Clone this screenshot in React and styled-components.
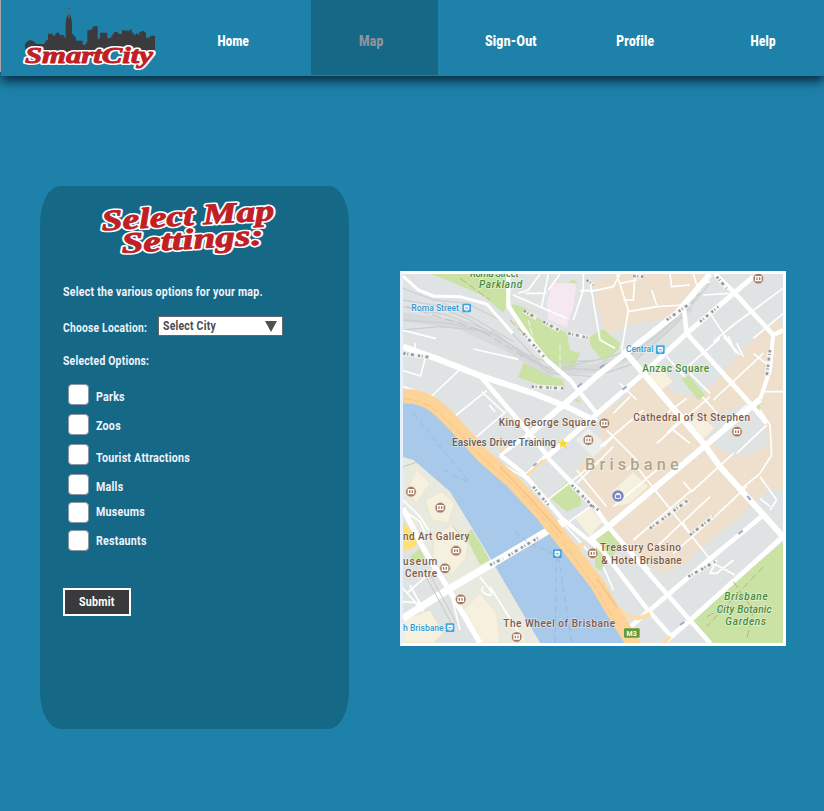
import React from "react";
import styled, { createGlobalStyle } from "styled-components";

const GlobalStyle = createGlobalStyle`
  * { box-sizing: border-box; }
  body {
    margin: 0;
    background: #1e81a9;
    font-family: Roboto, "Open Sans", sans-serif;
    overflow: hidden;
  }
`;

const Page = styled.div`
  width: 824px;
  height: 811px;
  display: flex;
  flex-direction: column;
  background: #1e81a9;
`;

const Header = styled.header`
  height: 76px;
  flex: none;
  margin-left: 1px;
  display: grid;
  grid-template-columns: 155px 155px 127px 146px 101px 139px;
  background: #1e81a9;
  box-shadow: -1px -4px 0 #a9a3a6, 0 5px 10px 0 rgba(0, 20, 32, 0.8);
`;

const Logo = styled.svg`
  width: 155px;
  height: 76px;
  display: block;
`;

const NavItem = styled.a`
  display: flex;
  align-items: center;
  justify-content: center;
  height: 75px;
  padding: 7px ${(p) => p.$right || 0}px 0 ${(p) => p.$left || 0}px;
  background: ${(p) => (p.$active ? "#156987" : "transparent")};
  color: ${(p) => (p.$active ? "#93939b" : "#fff")};
`;

const Condensed = styled.span`
  display: inline-block;
  white-space: nowrap;
  font-weight: ${(p) => p.$weight || 700};
  font-size: ${(p) => p.$size || 13}px;
  line-height: 16px;
  letter-spacing: 0.3px;
  transform: scaleX(${(p) => p.$x || 0.82});
  transform-origin: ${(p) => p.$origin || "left"} center;
`;

const Main = styled.main`
  flex: 1;
  display: flex;
  align-items: flex-start;
  padding: 110px 0 0 40px;
`;

const Panel = styled.section`
  width: 309px;
  height: 543px;
  border-radius: 20px / 38px;
  background: #156987;
  color: #f3f3fb;
  padding-left: 23px;
  display: flex;
  flex-direction: column;
  align-items: flex-start;
`;

const Title = styled.svg`
  width: 200px;
  height: 64px;
  margin: 9px 0 0 27px;
  flex: none;
`;

const Line = styled.div`
  height: 20px;
  display: flex;
  align-items: center;
  margin-top: ${(p) => p.$top}px;
`;

const LocationLabel = styled.label`
  width: 95px;
`;

const Select = styled.div`
  width: 125px;
  height: 20px;
  display: flex;
  align-items: center;
  justify-content: space-between;
  padding: 0 5px 1px 4px;
  border: 1px solid #65656c;
  background: #fff;
  color: #4b4b50;
`;

const Arrow = styled.svg`
  width: 12px;
  height: 11px;
  margin-top: 1px;
`;

const Options = styled.div`
  margin: 13px 0 0 5px;
  display: flex;
  flex-direction: column;
`;

const Option = styled.label`
  height: ${(p) => p.$h}px;
  display: flex;
  align-items: flex-start;
  gap: 7.4px;
`;

const Box = styled.span`
  width: 21px;
  height: 21px;
  border: 1px solid #8c97a5;
  border-radius: 4px;
  background: #fff;
`;

const OptionText = styled.span`
  display: flex;
  padding-top: ${(p) => p.$drop}px;
`;

const Submit = styled.button`
  width: 68px;
  height: 28px;
  margin-top: 37px;
  padding: 0;
  border: 2px solid #fff;
  background: #3a3a3c;
  color: #fff;
  font-family: inherit;
`;

const MapFrame = styled.figure`
  width: 386px;
  height: 375px;
  margin: 85px 0 0 51px;
  border: 3px solid #fff;
  border-left-color: #e8f0fc;
`;

const MapDrawing = styled.svg`
  width: 380px;
  height: 369px;
  display: block;
`;

const Lettering = styled.text`
  font-family: "Liberation Serif", serif;
  font-weight: 700;
  font-style: italic;
  fill: #c01f26;
  stroke: ${(p) => (p.$outline ? "#fff" : "#c01f26")};
  stroke-width: ${(p) => (p.$outline ? 4 : 0.9)}px;
  stroke-linejoin: round;
`;

const MapLabel = styled.text`
  font-family: Roboto, sans-serif;
  font-size: ${(p) => p.$size || 30}px;
  font-style: ${(p) => (p.$italic ? "italic" : "normal")};
  font-weight: 500;
  fill: ${(p) => p.$color || "#7f5947"};
  stroke: rgba(255, 255, 255, 0.5);
  stroke-width: 4px;
  paint-order: stroke;
`;

const Road = styled.path`
  fill: none;
  stroke: ${(p) => p.$color || "#fff"};
  stroke-width: ${(p) => p.$w || 5};
  stroke-linejoin: round;
`;

const Outlined = ({ children, ...rest }) => (
  <>
    <Lettering $outline {...rest}>{children}</Lettering>
    <Lettering {...rest}>{children}</Lettering>
  </>
);

const Brand = () => (
  <Logo viewBox="1 0 155 76">
    <path
      transform="scale(.33333)"
      fill="#3b3a3d"
      d="M75 150V132L84 123L92 120L102 125L110 132H133L140 119H144V101H158V107H166V101L175 97L180 105H190L197 117V70L200 52L206 40V25H208V40L213 50L216 70V103H222V110H228V122H248V134H256L262 124V91H269L274 88H278V79H293V116H300V98H322V115H332V110H337V102H342V96H352L357 102H366V91L388 92L395 86V98H401V107L410 100L418 105V97L430 92L438 99V113H448L453 107H465V150L430 158L380 142L330 158L240 153L170 157L110 147Z"
    />
    <path d="M69 9V18" stroke="#6f7882" strokeWidth="1" />
    <Outlined x="25" y="62.7" fontSize="22.5" textLength="128" lengthAdjust="spacingAndGlyphs">SmartCity</Outlined>
  </Logo>
);

const BEIGE = [
  "M580 30L650 12H915L870 95L790 150L700 160L655 185L620 195L590 110Z",
  "M1140 145L1149 175V665L1110 655L1050 705L1020 745L950 795L890 845L860 880L790 912L755 890L690 830L600 740L535 625L530 590L600 520L605 420L660 400L720 320L760 300L820 370L900 380L950 330L1000 270L1060 205Z",
];
const GREEN = [
  "M90 12H318L335 85L310 128L245 75L140 30Z",
  "M335 103L375 112L430 155L500 190L510 240L540 250L520 300L470 305L400 230L345 155Z",
  "M370 278L430 310L488 330L494 352L420 345L354 322Z",
  "M498 385L520 375L545 400Z",
  "M570 200L610 178L660 220L655 240L612 277L570 225Z",
  "M845 327L865 315L915 375L895 390Z",
  "M1050 402L1082 386L1078 420Z",
  "M1149 815L870 1050L940 1119H1149Z",
  "M450 683L500 637L540 680L545 705L500 725Z",
  "M585 805L625 775L665 825L600 902L585 890Z",
  "M195 795L215 775L270 870L240 885Z",
  "M30 860L60 835L75 865L45 880Z",
  "M505 38L520 28L535 42Z",
];
const MAJOR = [
  [18, "M9 230L110 266L240 317L400 370L500 410L590 455"],
  [9, "M9 18L55 60L100 78L180 80L260 102L338 190"],
  [13, "M325 12L325 108L400 220L440 270L510 330L590 430"],
  [14, "M240 317L380 480L445 560"],
  [13, "M440 560L590 715"],
  [13, "M300 555L370 610L485 745L590 830"],
  [18, "M390 490L490 405L600 310L690 240L830 130L930 12"],
  [12, "M300 555L390 490"],
  [15, "M430 570L570 450L720 320L860 190L1060 20"],
  [18, "M670 240L910 520L960 590L1149 800"],
  [14, "M850 100L860 190L1050 400L1100 460"],
  [14, "M945 12L1000 65L1120 195L1149 180"],
  [12, "M1120 190L1110 300L1080 388"],
  [18, "M1080 388L900 540L625 770L570 810"],
  [15, "M1149 800L860 1060L790 1119"],
  [14, "M1090 735L920 875L750 1020L680 1080"],
  [14, "M580 705L625 770L790 960L930 1119"],
  [13, "M570 800L610 845L740 1015L810 1095"],
  [22, "M9 1045L150 955L270 885L490 755"],
  [16, "M9 715L70 835L150 965L240 1119"],
];
const MINOR = `M9 181L108 206M45 218V240M75 266L62 318L9 302M220 237L355 268M180 298L95 378L9 350
M95 376L230 510L285 565M260 362L165 438M318 425L230 500M245 365L315 430M268 405L285 425
M375 70H440M420 12L385 60L355 70M445 12L425 110M480 12L445 60M550 10V60L520 150M540 62H585
M340 75L420 110L500 145M570 65L640 50L660 12M660 40L710 30M650 12L685 120L665 240M670 90H700L705 12
M685 125L770 110L850 105M755 60L770 105M880 12L890 45L930 35M810 12L815 50L870 45
M570 35L600 210L645 235M910 75L990 70M930 130L1010 250M960 205L840 310M970 200L1020 255M985 200L1005 245M1010 220L1030 260
M1150 130L1060 205M1149 55L1000 165L940 215M1090 250L940 390M1060 250L1110 290M800 260L960 440M870 310L930 370
M930 380L770 520M860 385L800 430M730 420L600 530M690 380L640 430M800 490L860 430M660 340L710 390
M1040 405L970 470M1090 365H1149M1080 420L1110 465L1115 555M1100 465L1010 550M620 480L710 570L680 600M640 500L610 530M820 480L870 520
M710 590L860 780L940 880L1005 915M850 635L875 665L1000 550M770 600L640 710M870 665L700 810M930 680L770 830
M1040 650L950 735L820 850M1115 555L1080 610L1020 660M1080 620L1130 690L1110 720M1080 685L1110 710
M950 870L930 910L950 910L1000 870M850 760L870 790M530 640L640 530
M570 590L430 700M370 620L440 690M530 600L620 710M570 710L480 775M480 750L580 860
M610 890L640 960M750 900L720 870M9 690L60 740L85 780M9 720L60 755L75 790M30 945L70 1020M9 955L70 1025
M100 900L20 970M240 920L270 960C290 990 230 970 250 950M270 950L370 1110M150 960L180 1080M300 580L370 620L440 550M9 995L70 1000`;
const RAIL = `M9 90L100 105L200 145L340 230L450 310L585 320L690 285L820 170L930 40
M9 110L140 135L260 180L350 235L430 290L590 300L680 265L780 190L890 85
M9 150L150 160L300 200L380 265L450 300L590 270L700 240L830 130
M9 180L120 170L280 185L360 245L450 280L590 270M130 100L230 150L340 215
M9 55L100 90L200 100L300 150L430 290`;
const BUILDINGS = [
  "M20 660L50 600L90 640L50 700Z", "M75 690L125 665L165 700L145 760L95 750Z",
  "M100 800L155 765L205 825L195 870L155 915L100 880Z", "M185 1025L240 970L290 1030L300 1119H240Z",
  "M9 1050L90 1020L130 1090L100 1119H9Z", "M740 320L780 290L820 335L780 365Z",
  "M860 460L900 435L945 475L900 515Z", "M640 660L700 605L745 650L690 700L650 710Z",
  "M525 745L570 710L608 755L570 800Z",
];
const PINS = [
  [1075, 26], [565, 510], [613, 460], [1011, 485], [33, 665], [121, 713],
  [168, 842], [135, 895], [182, 988], [350, 1101], [578, 850],
];
const STREET_MARKS = `M372 122L410 145M430 155L480 182M505 190L565 204M370 190L432 260M395 350L490 355M10 250L90 262
M800 150L870 100M900 155L955 110M950 20L980 55M700 18L730 20M1110 240L1100 320M560 30L580 45M400 650L445 705
M515 645L580 710M750 775L865 690M870 795L940 740M865 920L945 875M570 705L595 720M270 885L310 865M325 857L420 800`;

const MapPin = ({ x, y, square, color }) =>
  square ? (
    <g>
      <rect x={x - 13} y={y - 13} width="26" height="26" rx="3" fill={color} />
      <path d={`M${x - 7} ${y - 7}h14v12h-14zM${x - 4} ${y + 8}h8`} fill="#fff" stroke="#fff" strokeWidth="2" />
      <path d={`M${x - 4} ${y}h8`} stroke={color} strokeWidth="3" />
    </g>
  ) : (
    <g>
      <circle cx={x} cy={y} r="16" fill={color} stroke="#f4eee7" strokeWidth="2" />
      <path d={`M${x - 8} ${y - 6}h16v12h-16zM${x} ${y - 6}v12`} fill="none" stroke="#fff" strokeWidth="4" />
    </g>
  );

const CityMap = () => (
  <MapDrawing viewBox="9 12 1140 1107">
    <rect x="9" y="12" width="1140" height="1107" fill="#e0e3e3" />
    {BEIGE.map((d) => <path key={d} d={d} fill="#eee0cd" />)}
    <path d="M940 450L1040 395L1090 440L1105 520L1060 550L1000 560L950 530L920 500Z" fill="#e0e3e3" />
    <path d="M455 40L530 38L520 110L500 172L445 150L440 100Z" fill="#f6e8ef" />
    {GREEN.map((d) => <path key={d} d={d} fill="#cbe2a5" />)}
    <path d="M9 375L140 440L240 540L430 740L590 945L690 1119H420L265 855L150 665L40 570L9 560Z" fill="#a8c9ea" />
    <path d="M9 565L40 570L150 665L265 855L420 1119H240L150 955L70 820L9 700Z" fill="#e9eadf" />
    <path d="M195 795L215 777L270 870L240 885Z" fill="#cbe2a5" />
    <path d="M9 755L52 805L48 830L9 845Z" fill="#ffe173" />
    <Road d={RAIL} $w={4} $color="#cdd0d1" />
    <Road d="M9 140L180 165L330 235L440 305L590 295L710 250L870 110" $w={26} $color="rgba(205,207,209,.45)" />
    <Road d="M20 110L240 180L370 260M600 290L700 245L900 70" $w={3} $color="#bfc2c5" strokeDasharray="28 12" />
    {BUILDINGS.map((d) => <path key={d} d={d} fill="#f6f0df" stroke="#ecdfc1" strokeWidth="2" />)}
    <path d="M525 510L565 475L620 525L580 560Z" fill="#eceded" />
    <Road d={MINOR} />
    {MAJOR.map(([w, d]) => <Road key={d} $w={w} d={d} />)}
    <path d="M845 327L865 315L915 375L895 390Z" fill="#cbe2a5" />
    <Road $w={12} $color="#fddca9" d="M655 1015Q700 1065 750 1030M790 1119L810 1100M510 840L555 820" />
    <Road $w={7} $color="#fddca9" d="M380 615L440 567M300 548L320 528" />
    <Road $w={43} $color="#fdd397" d="M9 379C90 375 125 425 165 465L250 558L340 637L430 735L510 837L590 940L640 1025L705 1130" />
    <Road $w={2} $color="#efbb7d" d="M9 386C85 390 120 430 160 470L250 565L345 650L435 750L515 852L590 958L655 1070" strokeDasharray="22 9" />
    <Road $w={5} $color="#f6c489" d="M300 590L390 685L485 790M590 925L650 1010" />
    <Road $w={2} $color="#91b0d4" d="M40 430L210 640M345 785L380 815L470 855L465 1119M475 860L515 1119M130 600L200 635" strokeDasharray="18 12" />
    <Road $w={3} $color="#b1b98a" d="M180 25L270 90M330 150L370 190M1090 890L920 1070M1000 935L1060 1020L1040 1110M920 1040L980 1010L1110 1015" strokeDasharray="24 9" />
    <Road $w={3} $color="#f2f6e8" d="M480 225V310M385 150L402 215" strokeDasharray="20 6" />
    <Road $w={3} $color="#c8c9c6" d="M75 915L160 1070M85 905L170 1060M160 770L200 820M9 590L55 575" />
    <Road $w={14} $color="rgba(245,245,245,.75)" d={STREET_MARKS} />
    <Road $w={8} $color="#96999c" d={STREET_MARKS} strokeDasharray="7 5 3 8 9 12" />
    <Road $w={6} $color="#a2a7d0" d="M532 351L546 340M600 294L613 284M667 359L680 350M1042 678L1052 690M1015 792L1028 782M840 1065L853 1056M400 588L410 580" />
    {PINS.map(([x, y]) => <MapPin key={`${x}-${y}`} x={x} y={y} color="#a67c65" />)}
    <MapPin square x={200} y={114} color="#3ca4df" />
    <MapPin square x={781} y={239} color="#3ca4df" />
    <MapPin square x={150} y={1073} color="#3ca4df" />
    <MapPin square x={472} y={851} color="#3ca4df" />
    <circle cx="654" cy="678" r="17" fill="#7783c6" />
    <path d="M646 674h16v11h-16zM650 674v-4h8v4" fill="none" stroke="#fff" strokeWidth="3" />
    <path d="M489 505L493 515L504 516L496 523L499 534L489 528L479 534L482 523L474 516L485 515Z" fill="#f8da27" />

    <MapLabel x="210" y="21" $italic $color="#448c40" textLength="146">Roma Street</MapLabel>
    <MapLabel x="237" y="55" $italic $color="#448c40" textLength="130">Parkland</MapLabel>
    <MapLabel x="34" y="123" $size={26} $color="#319bd6" textLength="143">Roma Street</MapLabel>
    <MapLabel x="678" y="247" $size={26} $color="#319bd6" textLength="82" lengthAdjust="spacingAndGlyphs">Central</MapLabel>
    <MapLabel x="727" y="305" $color="#498e35" textLength="200">Anzac Square</MapLabel>
    <MapLabel x="296" y="469" textLength="292">King George Square</MapLabel>
    <MapLabel x="700" y="454" textLength="350">Cathedral of St Stephen</MapLabel>
    <MapLabel x="156" y="529" $color="#615b5e" textLength="312">Easives Driver Training</MapLabel>
    <MapLabel x="555" y="600" $size={49} $color="#afa488" textLength="281">Brisbane</MapLabel>
    <MapLabel x="9" y="810" textLength="199">nd Art Gallery</MapLabel>
    <MapLabel x="9" y="886" textLength="103">useum</MapLabel>
    <MapLabel x="15" y="922" textLength="96">Centre</MapLabel>
    <MapLabel x="600" y="842" textLength="243">Treasury Casino</MapLabel>
    <MapLabel x="604" y="881" textLength="241">&amp; Hotel Brisbane</MapLabel>
    <MapLabel x="310" y="1070" textLength="335">The Wheel of Brisbane</MapLabel>
    <MapLabel x="9" y="1083" $size={26} $color="#319bd6" textLength="122" lengthAdjust="spacingAndGlyphs">h Brisbane</MapLabel>
    <MapLabel x="973" y="990" $italic $color="#488b3a" textLength="130">Brisbane</MapLabel>
    <MapLabel x="950" y="1028" $italic $color="#488b3a" textLength="165">City Botanic</MapLabel>
    <MapLabel x="976" y="1066" $italic $color="#488b3a" textLength="122">Gardens</MapLabel>
    <rect x="672" y="1075" width="47" height="28" rx="3" fill="#659a3a" />
    <text x="695" y="1097" textAnchor="middle" fontFamily="Roboto" fontWeight="700" fontSize="21" fill="#fff">M3</text>
  </MapDrawing>
);

const OPTIONS = [
  ["Parks", 30, 5],
  ["Zoos", 30, 4],
  ["Tourist Attractions", 30, 6],
  ["Malls", 28, 5],
  ["Museums", 28, 2],
  ["Restaunts", 21, 3],
];

export default function App() {
  return (
    <Page>
      <GlobalStyle />
      <Header>
        <Brand />
        <NavItem><Condensed $size={14} $weight={900} $x={0.82} $origin="center">Home</Condensed></NavItem>
        <NavItem $active $right={6}><Condensed $size={14} $weight={900} $x={0.86} $origin="center">Map</Condensed></NavItem>
        <NavItem><Condensed $size={14} $weight={900} $x={0.87} $origin="center">Sign-Out</Condensed></NavItem>
        <NavItem $left={1}><Condensed $size={14} $weight={900} $x={0.85} $origin="center">Profile</Condensed></NavItem>
        <NavItem $left={18}><Condensed $size={14} $weight={900} $x={0.83} $origin="center">Help</Condensed></NavItem>
      </Header>
      <Main>
        <Panel>
          <Title viewBox="90 195 200 64">
            <g transform="rotate(-3.5 102 230.5)">
              <Outlined x="102" y="230.5" fontSize="29" textLength="173" lengthAdjust="spacingAndGlyphs">Select Map</Outlined>
            </g>
            <g transform="rotate(-3.5 122 253)">
              <Outlined x="122" y="253" fontSize="29" textLength="142" lengthAdjust="spacingAndGlyphs">Settings:</Outlined>
            </g>
          </Title>
          <Line $top={23}><Condensed $x={0.814}>Select the various options for your map.</Condensed></Line>
          <Line $top={14}>
            <LocationLabel><Condensed $x={0.79}>Choose Location:</Condensed></LocationLabel>
            <Select>
              <Condensed $x={0.8}>Select City</Condensed>
              <Arrow viewBox="0 0 12 11"><path d="M0 0H12L6 11Z" fill="#4f4f54" /></Arrow>
            </Select>
          </Line>
          <Line $top={15}><Condensed $x={0.795}>Selected Options:</Condensed></Line>
          <Options>
            {OPTIONS.map(([name, h, drop]) => (
              <Option key={name} $h={h}>
                <Box />
                <OptionText $drop={drop}><Condensed>{name}</Condensed></OptionText>
              </Option>
            ))}
          </Options>
          <Submit type="button"><Condensed $origin="center">Submit</Condensed></Submit>
        </Panel>
        <MapFrame><CityMap /></MapFrame>
      </Main>
    </Page>
  );
}
